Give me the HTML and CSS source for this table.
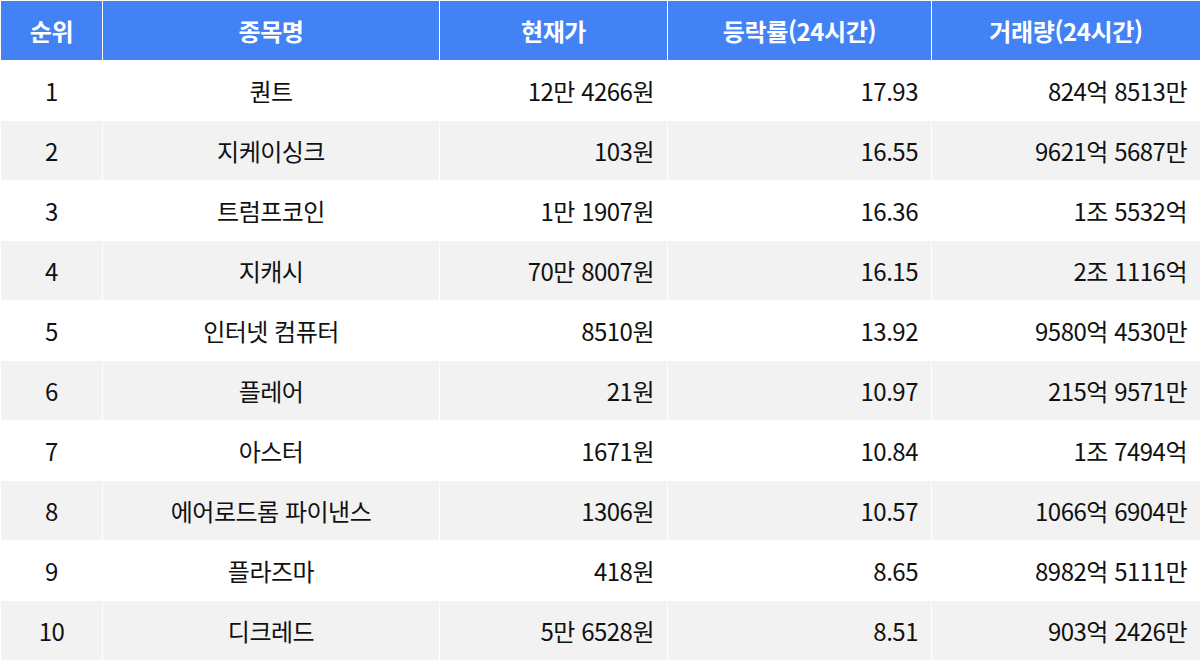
FILE: index.html
```html
<!DOCTYPE html>
<html lang="ko">
<head>
<meta charset="utf-8">
<link rel="stylesheet" href="styles.css">
</head>
<body>
<table class="rank">
  <colgroup>
    <col class="c1"><col class="c2"><col class="c3"><col class="c4"><col class="c5">
  </colgroup>
  <thead>
    <tr><th>순위</th><th>종목명</th><th>현재가</th><th>등락률(24시간)</th><th>거래량(24시간)</th></tr>
  </thead>
  <tbody>
    <tr><td class="ctr">1</td><td class="ctr">퀀트</td><td class="num">12만 4266원</td><td class="num">17.93</td><td class="num">824억 8513만</td></tr>
    <tr><td class="ctr">2</td><td class="ctr">지케이싱크</td><td class="num">103원</td><td class="num">16.55</td><td class="num">9621억 5687만</td></tr>
    <tr><td class="ctr">3</td><td class="ctr">트럼프코인</td><td class="num">1만 1907원</td><td class="num">16.36</td><td class="num">1조 5532억</td></tr>
    <tr><td class="ctr">4</td><td class="ctr">지캐시</td><td class="num">70만 8007원</td><td class="num">16.15</td><td class="num">2조 1116억</td></tr>
    <tr><td class="ctr">5</td><td class="ctr">인터넷 컴퓨터</td><td class="num">8510원</td><td class="num">13.92</td><td class="num">9580억 4530만</td></tr>
    <tr><td class="ctr">6</td><td class="ctr">플레어</td><td class="num">21원</td><td class="num">10.97</td><td class="num">215억 9571만</td></tr>
    <tr><td class="ctr">7</td><td class="ctr">아스터</td><td class="num">1671원</td><td class="num">10.84</td><td class="num">1조 7494억</td></tr>
    <tr><td class="ctr">8</td><td class="ctr">에어로드롬 파이낸스</td><td class="num">1306원</td><td class="num">10.57</td><td class="num">1066억 6904만</td></tr>
    <tr><td class="ctr">9</td><td class="ctr">플라즈마</td><td class="num">418원</td><td class="num">8.65</td><td class="num">8982억 5111만</td></tr>
    <tr><td class="ctr">10</td><td class="ctr">디크레드</td><td class="num">5만 6528원</td><td class="num">8.51</td><td class="num">903억 2426만</td></tr>
  </tbody>
</table>
</body>
</html>
```
FILE: styles.css
```css
html, body {
  margin: 0;
  padding: 0;
  background: #ffffff;
}
body {
  font-family: "Noto Sans CJK KR", "Noto Sans", sans-serif;
  color: #111111;
}
.rank {
  width: 1200px;
  border-collapse: collapse;
  table-layout: fixed;
}
.c1 { width: 102px; }
.c2 { width: 337px; }
.c3 { width: 228px; }
.c4 { width: 264px; }
.c5 { width: 269px; }
.rank th {
  background: #4282f4;
  color: #ffffff;
  font-weight: 700;
  font-size: 24px;
  height: 59px;
  padding: 0;
  border: 1px solid #ffffff;
  text-align: center;
  letter-spacing: -0.4px;
}
.rank td {
  height: 59px;
  padding: 0 13px;
  font-size: 24px;
  border: 1px solid #ffffff;
  letter-spacing: -0.5px;
}
.rank tbody tr:nth-child(even) td {
  background: #f2f2f2;
}
.rank td.ctr { text-align: center; padding: 0; }
.rank td.num { text-align: right; }
```
